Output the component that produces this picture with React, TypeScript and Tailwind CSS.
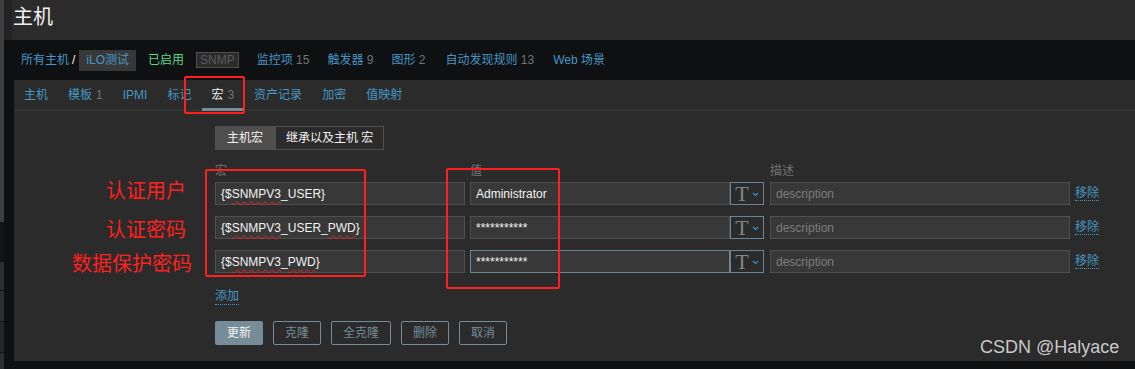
import React from 'react';

const font = { fontFamily: '"Liberation Sans", "Noto Sans CJK SC", sans-serif' };

type TRow = { macro: React.ReactNode; value: string; focused?: boolean };

function Wavy({ children }: { children: React.ReactNode }) {
  return (
    <span className="underline decoration-wavy decoration-[#e0262c] decoration-1 underline-offset-[3px]">
      {children}
    </span>
  );
}

const rows: TRow[] = [
  {
    macro: (
      <>
        {'{$'}
        <Wavy>SNMPV3</Wavy>
        {'_USER}'}
      </>
    ),
    value: 'Administrator',
  },
  {
    macro: (
      <>
        {'{$'}
        <Wavy>SNMPV3</Wavy>
        {'_USER_'}
        <Wavy>PWD</Wavy>
        {'}'}
      </>
    ),
    value: '***********',
  },
  {
    macro: (
      <>
        {'{$'}
        <Wavy>SNMPV3</Wavy>
        {'_'}
        <Wavy>PWD</Wavy>
        {'}'}
      </>
    ),
    value: '***********',
    focused: true,
  },
];

const tabs = [
  { label: '主机' },
  { label: '模板', count: '1' },
  { label: 'IPMI' },
  { label: '标记' },
  { label: '宏', count: '3', active: true },
  { label: '资产记录' },
  { label: '加密' },
  { label: '值映射' },
];

function TypeButton() {
  return (
    <div className="flex h-[23px] w-[34px] items-center justify-center gap-[3px] border border-[#6b8593] bg-[#2b2b2b]">
      <span className="text-[22px] leading-none text-[#7a858c]" style={{ fontFamily: '"Liberation Serif", serif' }}>
        T
      </span>
      <svg width="7" height="5" viewBox="0 0 7 5" className="mt-[1px]">
        <path d="M1 1 L3.5 3.5 L6 1" fill="none" stroke="#3d8fd1" strokeWidth="1.2" />
      </svg>
    </div>
  );
}

export default function App() {
  return (
    <div className="relative flex h-[369px] w-[1135px] overflow-hidden bg-[#0e1012] text-[12px]" style={font}>
      {/* left edge strip (another window) */}
      <div className="flex w-[4px] flex-col">
        <div className="h-[222px] bg-[#3e3e3e]" />
        <div className="h-[40px] bg-[#141414]" />
        <div className="h-[29px] border-b border-[#141414] bg-[#2d2d2d]" />
        <div className="h-[31px] border-b border-[#141414] bg-[#2d2d2d]" />
        <div className="h-[31px] border-b border-[#141414] bg-[#262626]" />
        <div className="flex-1 bg-[#2d2d2d]" />
      </div>

      <div className="flex min-w-0 flex-1 flex-col">
        {/* Header */}
        <div className="flex h-[40px] bg-[#2b2b2b]">
          <div className="w-[8px] bg-[#232323]" />
          <h1 className="pl-[1px] pt-[5px] text-[20px] leading-[24px] text-[#f2f2f2]">主机</h1>
        </div>

        {/* Breadcrumbs */}
        <div className="flex h-[40px] items-center pl-[17px] text-[12px]">
          <span className="text-[#4796c4]">所有主机</span>
          <span className="ml-[3px] text-[#f2f2f2]">/</span>
          <span className="ml-[4px] flex h-[21px] items-center bg-[#383838] px-[7px] text-[#4796c4]">iLO测试</span>
          <span className="ml-[12px] text-[#59db8f]">已启用</span>
          <span className="ml-[12px] flex h-[16px] items-center border border-[#4f4f4f] bg-[#2b2b2b] px-[3px] text-[#5a5a5a]">
            SNMP
          </span>
          <span className="ml-[18px] text-[#4796c4]">
            监控项 <span className="text-[#737373]">15</span>
          </span>
          <span className="ml-[18px] text-[#4796c4]">
            触发器 <span className="text-[#737373]">9</span>
          </span>
          <span className="ml-[18px] text-[#4796c4]">
            图形 <span className="text-[#737373]">2</span>
          </span>
          <span className="ml-[20px] text-[#4796c4]">
            自动发现规则 <span className="text-[#737373]">13</span>
          </span>
          <span className="ml-[19px] text-[#4796c4]">Web 场景</span>
        </div>

        {/* Panel */}
        <div className="ml-[10px] flex h-[281px] flex-col bg-[#2b2b2b]">
          {/* Tabs */}
          <div className="flex h-[31px] border-b border-[#383838] pl-[10px]">
            {tabs.map((t) => (
              <div
                key={t.label}
                className={`relative mr-[20px] flex items-center ${t.active ? 'text-[#f2f2f2]' : 'text-[#4796c4]'}`}
              >
                {t.label}
                {t.count && <span className="ml-[4px] text-[#737373]">{t.count}</span>}
                {t.active && <div className="absolute bottom-[-1px] left-[-9px] right-[-9px] h-[3px] bg-[#768d99]" />}
              </div>
            ))}
          </div>

          {/* Form */}
          <div className="flex flex-col pl-[201px] pt-[15px]">
            <div className="flex">
              <div className="flex h-[24px] items-center bg-[#4f4f4f] px-[12px] text-[#f2f2f2]">主机宏</div>
              <div className="flex h-[24px] items-center border border-[#4f4f4f] bg-[#2b2b2b] px-[10px] text-[#f2f2f2]">
                继承以及主机 宏
              </div>
            </div>

            <div className="mt-[12px] flex h-[17px] items-center text-[#737373]">
              <span className="w-[255px]">宏</span>
              <span className="w-[300px]">值</span>
              <span>描述</span>
            </div>

            <div className="flex flex-col gap-[11px] pt-[3px]">
              {rows.map((r, i) => (
                <div key={i} className="flex items-center">
                  <div className="flex h-[23px] w-[250px] items-center border border-[#4f4f4f] bg-[#383838] px-[5px] text-[#f2f2f2]">
                    {r.macro}
                  </div>
                  <div
                    className={`ml-[5px] flex h-[23px] w-[260px] items-center border bg-[#383838] px-[5px] text-[#f2f2f2] ${
                      r.focused ? 'border-[#6b8593]' : 'border-[#4f4f4f]'
                    }`}
                  >
                    {r.value}
                  </div>
                  <TypeButton />
                  <div className="ml-[6px] flex h-[23px] w-[300px] items-center border border-[#4f4f4f] bg-[#383838] px-[5px] text-[#7d7d7d]">
                    description
                  </div>
                  <span className="ml-[5px] border-b border-dotted border-[#4796c4] leading-[14px] text-[#4796c4]">移除</span>
                </div>
              ))}
            </div>

            <div className="mt-[16px] flex">
              <span className="border-b border-dotted border-[#4796c4] leading-[15px] text-[#4796c4]">添加</span>
            </div>

            <div className="mt-[16px] flex gap-[10px]">
              <button className="h-[24px] rounded-[2px] bg-[#768d99] px-[12px] text-[#f2f2f2]">更新</button>
              <button className="h-[24px] rounded-[2px] border border-[#768d99] px-[11px] text-[#768d99]">克隆</button>
              <button className="h-[24px] rounded-[2px] border border-[#768d99] px-[11px] text-[#768d99]">全克隆</button>
              <button className="h-[24px] rounded-[2px] border border-[#768d99] px-[11px] text-[#768d99]">删除</button>
              <button className="h-[24px] rounded-[2px] border border-[#768d99] px-[11px] text-[#768d99]">取消</button>
            </div>
          </div>
        </div>
      </div>

      {/* Annotations */}
      <div className="pointer-events-none absolute left-[184px] top-[76px] h-[38px] w-[61px] rounded-[2px] border-2 border-[#ff1f1f]" />
      <div className="pointer-events-none absolute left-[205px] top-[169px] h-[108px] w-[161px] rounded-[2px] border-2 border-[#ff1f1f]" />
      <div className="pointer-events-none absolute left-[446px] top-[168px] h-[121px] w-[114px] rounded-[2px] border-2 border-[#ff1f1f]" />
      <div
        className="absolute left-[106px] top-[177px] text-[20px] leading-[26px] text-[#ff2020]"
        style={{ fontFamily: '"Noto Sans CJK SC", sans-serif' }}
      >
        认证用户
      </div>
      <div
        className="absolute left-[106px] top-[216px] text-[20px] leading-[26px] text-[#ff2020]"
        style={{ fontFamily: '"Noto Sans CJK SC", sans-serif' }}
      >
        认证密码
      </div>
      <div
        className="absolute left-[72px] top-[250px] text-[20px] leading-[26px] text-[#ff2020]"
        style={{ fontFamily: '"Noto Sans CJK SC", sans-serif' }}
      >
        数据保护密码
      </div>
      <div className="absolute left-[980px] top-[336px] text-[18px] leading-[22px] text-[#c8c8c8]">CSDN @Halyace</div>
    </div>
  );
}
